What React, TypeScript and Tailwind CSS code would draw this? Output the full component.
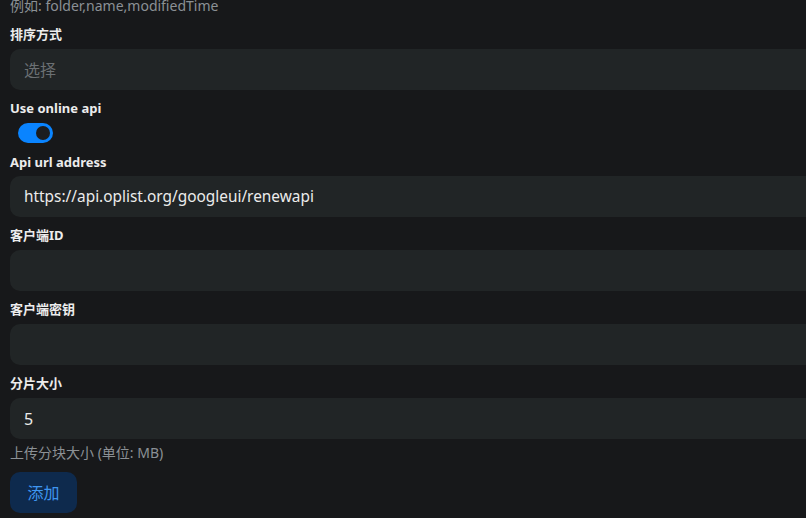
export default function App() {
    const fields = [
        { label: '客户端ID', value: '' },
        { label: '客户端密钥', value: '' },
    ];

    return (
        <div className="w-[806px] h-[518px] overflow-hidden bg-[#17181a] font-['Noto_Sans','Noto_Sans_CJK_SC',sans-serif]">
            <div className="w-[830px] pl-[10px] -mt-[4px]">
                <p className="text-[14px] leading-[20px] text-[#8b9095]">例如: folder,name,modifiedTime</p>

                <label className="block mt-[8px] text-[13px] leading-[20px] font-bold text-[#ececec]">排序方式</label>
                <div className="mt-[5px] h-[41px] rounded-[10px] bg-[#212526] flex items-center px-[14px] text-[16px] text-[#6b7073]">选择</div>

                <label className="block mt-[8px] text-[13px] leading-[20px] font-bold text-[#ececec]">Use online api</label>
                <div className="mt-[5px] ml-[8px] w-[35px] h-[20px] rounded-full bg-[#0a84ff] flex items-center justify-end pr-[3px]">
                    <div className="w-[14px] h-[14px] rounded-full bg-[#1b1d20]"></div>
                </div>

                <label className="block mt-[9px] text-[13px] leading-[20px] font-bold text-[#ececec]">Api url address</label>
                <div className="mt-[4px] h-[41px] rounded-[10px] bg-[#212526] flex items-center px-[14px] text-[15.4px] text-[#ececec]">https://api.oplist.org/googleui/renewapi</div>

                {fields.map((f) => (
                    <div key={f.label}>
                        <label className="block mt-[8px] text-[13px] leading-[20px] font-bold text-[#ececec]">{f.label}</label>
                        <div className="mt-[5px] h-[41px] rounded-[10px] bg-[#212526] flex items-center px-[14px] text-[16px] text-[#ececec]">{f.value}</div>
                    </div>
                ))}

                <label className="block mt-[8px] text-[13px] leading-[20px] font-bold text-[#ececec]">分片大小</label>
                <div className="mt-[5px] h-[41px] rounded-[10px] bg-[#212526] flex items-center px-[14px] text-[16px] text-[#ececec]">5</div>
                <p className="mt-[4px] text-[14px] leading-[20px] text-[#8b9095]">上传分块大小 (单位: MB)</p>

                <button className="mt-[9px] w-[67px] h-[41px] rounded-[10px] bg-[#0e2a4d] text-[16px] text-[#3f96f0]">添加</button>
            </div>
        </div>
    );
}
